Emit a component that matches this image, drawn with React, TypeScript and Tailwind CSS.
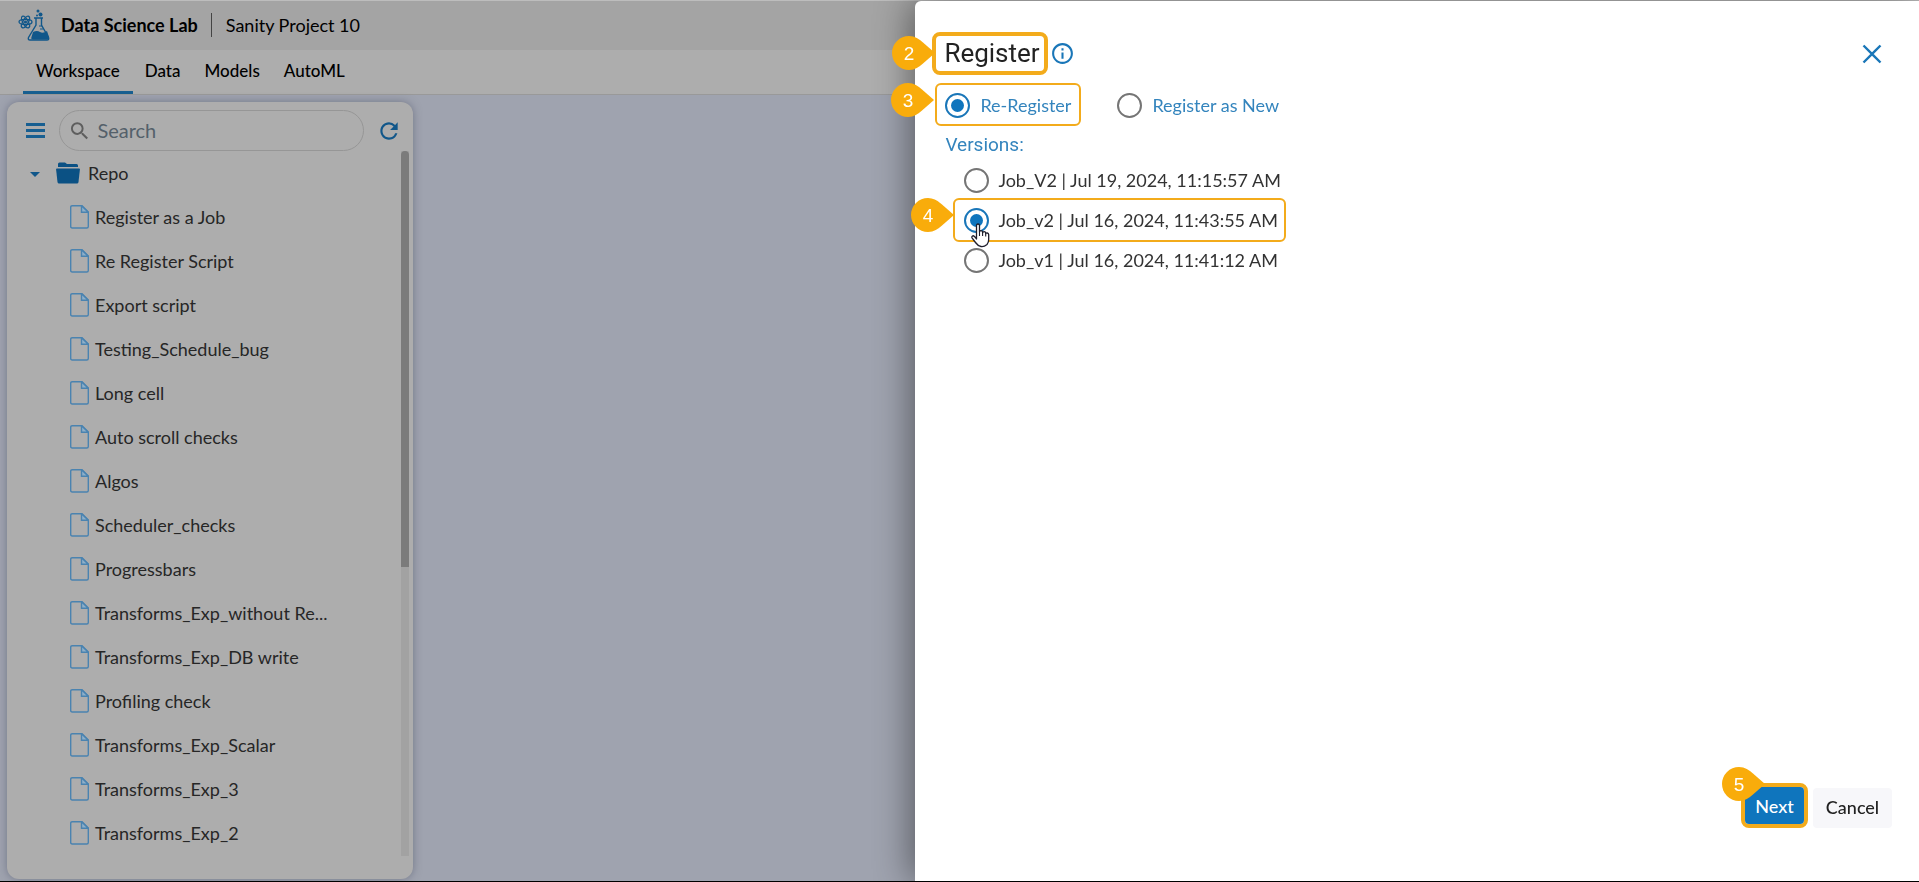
import { MdInfoOutline, MdRefresh, MdSearch } from "react-icons/md";

const scripts = [
  "Register as a Job",
  "Re Register Script",
  "Export script",
  "Testing_Schedule_bug",
  "Long cell",
  "Auto scroll checks",
  "Algos",
  "Scheduler_checks",
  "Progressbars",
  "Transforms_Exp_without Re...",
  "Transforms_Exp_DB write",
  "Profiling check",
  "Transforms_Exp_Scalar",
  "Transforms_Exp_3",
  "Transforms_Exp_2",
];

const tabs = ["Workspace", "Data", "Models", "AutoML"];

const versions = [
  { id: "v3", label: "Job_V2 | Jul 19, 2024, 11:15:57 AM" },
  { id: "v2", label: "Job_v2 | Jul 16, 2024, 11:43:55 AM" },
  { id: "v1", label: "Job_v1 | Jul 16, 2024, 11:41:12 AM" },
];

const radioClass =
  "size-[25px] shrink-0 appearance-none rounded-full border-2 border-[#757575] bg-clip-content p-1 checked:border-[#1976b8] checked:bg-[#0f75bd]";

function Logo() {
  return (
    <svg width="32" height="32" viewBox="0 0 32 32" fill="none" stroke="#11578a">
      <g strokeWidth="1.3">
        <ellipse cx="7.5" cy="13" rx="6.5" ry="2.6" />
        <ellipse cx="7.5" cy="13" rx="6.5" ry="2.6" transform="rotate(60 7.5 13)" />
        <ellipse cx="7.5" cy="13" rx="6.5" ry="2.6" transform="rotate(120 7.5 13)" />
      </g>
      <circle cx="7.5" cy="13" r="1.6" fill="#11578a" stroke="none" />
      <path d="M16 9h9M18 9v7l-7.5 12.5q-.8 2.500 1.5 2.500h17q2.300 0 1.5-2.500L23.500 16V9" strokeWidth="1.4" />
      <path d="M15 23q4-2 7 0t7-1l2 6q.5 2.500-2 2.500H15.500q-3 0-2-2.500z" fill="#11578a" stroke="none" />
      <path d="M21 17h3M22 20h3" strokeWidth="1" />
      <circle cx="20" cy="2" r="1.5" fill="#11578a" stroke="none" />
      <circle cx="22.5" cy="5.5" r="2" fill="#11578a" stroke="none" />
      <circle cx="19" cy="6.5" r="1" fill="#11578a" stroke="none" />
    </svg>
  );
}

function FolderIcon() {
  return (
    <svg width="24" height="22" viewBox="0 0 24 22" fill="#0b5184">
      <path d="M2 5V2q0-1.500 1.500-1.500H9L11 2h9.500Q22 2 22 3.500V5z" />
      <path d="M1 6.500h22q1 0 .9 1L22.500 20q-.2 1.500-1.500 1.500H3Q1.700 21.500 1.500 20L.1 7.500q-.1-1 .9-1z" />
    </svg>
  );
}

function FileIcon() {
  return (
    <svg width="19" height="24" viewBox="0 0 19 24" fill="none" stroke="#4a83b0" strokeWidth="1.4">
      <path d="M2.200.7H12l6.300 6.300v14.500q0 1.500-1.500 1.500H2.200Q.7 23 .7 21.500V2.200Q.7.7 2.200.7z" />
      <path d="M11.500.7V7.300h6.800z" fill="#8eafc9" />
    </svg>
  );
}

function Callout({ n, className }: { n: number; className: string }) {
  return (
    <svg width="43" height="34" viewBox="0 0 43 34" className={"absolute z-10 " + className}>
      <path d="M17 0C23 0 27 3 31 6.500L43 17L31 27.500C27 31 23 34 17 34A17 17 0 0 1 17 0z" fill="#f9ac0b" />
      <text x="17" y="24" textAnchor="middle" fontSize="19" fill="#fff" fontFamily="Liberation Sans, Arial, sans-serif">
        {n}
      </text>
    </svg>
  );
}

function HandCursor() {
  return (
    <svg width="19" height="25" viewBox="0 0 19 25" className="absolute top-[23px] left-4">
      <path
        d="M5.500 14V2.700Q5.500 1 7 1t1.500 1.700V9q.2-1.300 1.500-1.300T11.600 9v.8q.3-1.200 1.600-1.100t1.500 1.500v.6q.4-1 1.600-.8t1.400 1.600v4.900q0 3-1.700 5Q13 24 10 23.500T4.500 19.500L1 14.800q-.5-1.500.8-2t3.700 3.200z"
        fill="#fff"
        stroke="#1d1d2b"
        strokeWidth="1.3"
        strokeLinejoin="round"
      />
      <path d="M8.500 9v4M11.600 9.500V13M14.700 11v2.500" stroke="#1d1d2b" strokeWidth="1.1" />
    </svg>
  );
}

function Sidebar() {
  return (
    <aside className="mt-[7px] mb-0.5 ml-[7px] flex w-[406px] flex-col overflow-hidden rounded-xl bg-[#adadad] pt-2 shadow-[0_0_8px_rgba(70,75,95,0.5)]">
      <div className="flex h-[41px] shrink-0 items-center pl-[19px]">
        <button aria-label="Toggle menu" className="flex w-[19px] flex-col gap-[3px]">
          <span className="h-[3px] bg-[#185f91]" />
          <span className="h-[3px] bg-[#185f91]" />
          <span className="h-[3px] bg-[#185f91]" />
        </button>
        <label className="ml-3.5 flex h-full w-[305px] items-center gap-1.5 rounded-full border border-[#969696] pl-2">
          <MdSearch size={26} color="#5e5e5e" />
          <input
            type="text"
            aria-label="Search"
            placeholder="Search"
            className="w-full bg-transparent pb-0.5 text-xl text-[#444] outline-none placeholder:text-[#54606a]"
          />
        </label>
        <button aria-label="Refresh" className="ml-3">
          <MdRefresh size={26} color="#11578a" />
        </button>
      </div>
      <div className="flex min-h-0 flex-1 justify-between pr-1">
        <div className="text-lg text-[#262626]">
          <div className="flex h-[43px] items-center pl-[23px]">
            <button aria-label="Collapse Repo" className="mt-1 border-x-5 border-t-5 border-x-transparent border-t-[#11578a]" />
            <span className="ml-4">
              <FolderIcon />
            </span>
            <span className="ml-2">Repo</span>
          </div>
          <ul className="mt-px">
            {scripts.map((name) => (
              <li key={name} className="flex h-11 items-center gap-1.5 pl-[63px]">
                <FileIcon />
                <span>{name}</span>
              </li>
            ))}
          </ul>
        </div>
        <div className="mb-[23px] w-2 bg-[#a2a2a2]">
          <div className="h-[59%] rounded-t-sm bg-[#7b7b7b]" />
        </div>
      </div>
    </aside>
  );
}

function RegisterPanel() {
  return (
    <section className="fixed top-px right-0 bottom-px flex w-[52.3%] flex-col rounded-tl-md bg-white pt-[31px] shadow-[-4px_0_36px_rgba(0,0,0,0.45)]">
      <header className="flex items-center justify-between pr-[37px] pl-[17px]">
        <div className="flex items-center gap-0.5">
          <div className="relative h-[43px] rounded-lg border-4 border-[#f3ab1b] pr-1 pl-2">
            <Callout n={2} className="top-0 -left-11" />
            <h1 className="font-[Roboto,sans-serif] text-[26px] leading-[35px] text-[#222]">Register</h1>
          </div>
          <MdInfoOutline size={25} color="#1976b8" />
        </div>
        <button aria-label="Close">
          <svg width="20" height="20" viewBox="0 0 20 20" stroke="#1976b8" strokeWidth="2.4">
            <path d="M1.500 1.500l17 17M18.500 1.500l-17 17" />
          </svg>
        </button>
      </header>

      <div className="mt-2 flex items-center gap-9 pl-5 text-lg text-[#3384bd]">
        <label className="relative flex h-[43px] items-center gap-2.5 rounded-md border-2 border-[#f3ab1b] pt-px pr-2 pl-2">
          <Callout n={3} className="-top-0.5 -left-[46px]" />
          <input type="radio" name="mode" defaultChecked className={radioClass} />
          Re-Register
        </label>
        <label className="flex items-center gap-2.5 pt-px">
          <input type="radio" name="mode" className={radioClass} />
          Register as New
        </label>
      </div>

      <fieldset className="text-lg text-[#333]">
        <legend className="pt-1 pl-[30px] font-[Roboto,sans-serif] text-[19px] leading-[30px] text-[#3384bd]">Versions:</legend>
        <div className="flex flex-col items-start pl-[38px]">
          {versions.map((v) => (
            <label
              key={v.id}
              className={
                v.id === "v2"
                  ? "relative -my-0.5 flex h-11 items-center gap-[9px] rounded-md border-2 border-[#f3ab1b] pr-1.5 pl-[9px]"
                  : "flex h-10 items-center gap-[9px] pl-[11px]"
              }
            >
              {v.id === "v2" && <Callout n={4} className="-top-0.5 -left-[44px]" />}
              <input type="radio" name="version" defaultChecked={v.id === "v2"} className={radioClass} />
              {v.label}
              {v.id === "v2" && <HandCursor />}
            </label>
          ))}
        </div>
      </fieldset>

      <footer className="mt-auto mb-[53px] flex justify-end gap-[5px] pr-[27px] text-lg font-medium">
        <div className="relative rounded-lg border-4 border-[#f3ab1b]">
          <Callout n={5} className="-top-5 -left-[23px]" />
          <button className="h-[37px] w-[59px] rounded-sm bg-[#0f75bd] text-white">Next</button>
        </div>
        <button className="mt-[5px] h-10 w-[79px] rounded-sm bg-[#f7f7fa] pb-0.5 text-[#222]">Cancel</button>
      </footer>
    </section>
  );
}

export default function App() {
  return (
    <div className="flex h-screen flex-col overflow-hidden border-t border-b border-t-[#bdbdbd] border-b-black bg-[#9fa3af] font-[Lato,sans-serif]">
      <header className="flex h-[49px] shrink-0 items-center bg-[#a4a4a4] pb-0.5 pl-[18px] text-lg text-black">
        <Logo />
        <span className="ml-[11px] font-bold">Data Science Lab</span>
        <span className="mr-3.5 ml-[13px] h-6 w-px bg-[#444]" />
        <span>Sanity Project 10</span>
      </header>
      <nav className="flex h-[45px] shrink-0 border-b border-[#999] bg-[#adadad] pl-[23px] text-[17px] font-medium text-black">
        {tabs.map((tab, i) => (
          <a
            key={tab}
            href="#"
            className={i === 0 ? "border-b-3 border-[#185f91] px-[13px] pt-2" : "px-3 pt-2"}
          >
            {tab}
          </a>
        ))}
      </nav>
      <main className="flex min-h-0 flex-1">
        <Sidebar />
      </main>
      <RegisterPanel />
    </div>
  );
}
